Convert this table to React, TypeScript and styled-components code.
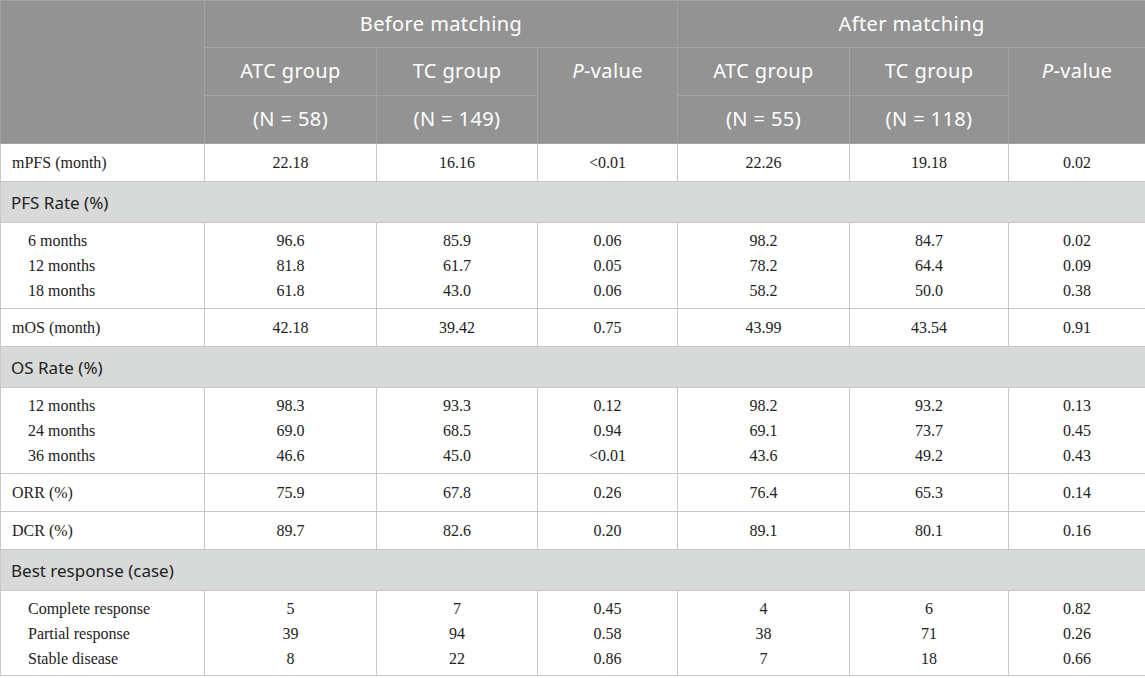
import styled, { createGlobalStyle } from "styled-components";

const GlobalStyle = createGlobalStyle`
  html, body {
    margin: 0;
    padding: 0;
    background: #ffffff;
  }
`;

type Line = string[];

type BodyRow =
  | { kind: "single"; label: string; values: string[] }
  | { kind: "section"; label: string }
  | { kind: "group"; labels: string[]; values: Line[]; height: number };

const rows: BodyRow[] = [
  { kind: "single", label: "mPFS (month)", values: ["22.18", "16.16", "<0.01", "22.26", "19.18", "0.02"] },
  { kind: "section", label: "PFS Rate (%)" },
  {
    kind: "group",
    height: 86,
    labels: ["6 months", "12 months", "18 months"],
    values: [
      ["96.6", "81.8", "61.8"],
      ["85.9", "61.7", "43.0"],
      ["0.06", "0.05", "0.06"],
      ["98.2", "78.2", "58.2"],
      ["84.7", "64.4", "50.0"],
      ["0.02", "0.09", "0.38"],
    ],
  },
  { kind: "single", label: "mOS (month)", values: ["42.18", "39.42", "0.75", "43.99", "43.54", "0.91"] },
  { kind: "section", label: "OS Rate (%)" },
  {
    kind: "group",
    height: 86,
    labels: ["12 months", "24 months", "36 months"],
    values: [
      ["98.3", "69.0", "46.6"],
      ["93.3", "68.5", "45.0"],
      ["0.12", "0.94", "<0.01"],
      ["98.2", "69.1", "43.6"],
      ["93.2", "73.7", "49.2"],
      ["0.13", "0.45", "0.43"],
    ],
  },
  { kind: "single", label: "ORR (%)", values: ["75.9", "67.8", "0.26", "76.4", "65.3", "0.14"] },
  { kind: "single", label: "DCR (%)", values: ["89.7", "82.6", "0.20", "89.1", "80.1", "0.16"] },
  { kind: "section", label: "Best response (case)" },
  {
    kind: "group",
    height: 85,
    labels: ["Complete response", "Partial response", "Stable disease"],
    values: [
      ["5", "39", "8"],
      ["7", "94", "22"],
      ["0.45", "0.58", "0.86"],
      ["4", "38", "7"],
      ["6", "71", "18"],
      ["0.82", "0.26", "0.66"],
    ],
  },
];

const colWidths = [204, 172, 161, 140, 172, 159, 137];

const App: React.FC = () => {
  return (
    <>
      <GlobalStyle />
      <Table>
        <colgroup>
          {colWidths.map((w, i) => (
            <col key={i} style={{ width: w }} />
          ))}
        </colgroup>
        <thead>
          <HeadRow $height={47}>
            <HeadCell rowSpan={3} />
            <HeadCell colSpan={3}>Before matching</HeadCell>
            <HeadCell colSpan={3}>After matching</HeadCell>
          </HeadRow>
          <HeadRow $height={48}>
            <HeadCell>ATC group</HeadCell>
            <HeadCell>TC group</HeadCell>
            <HeadCell rowSpan={2}>
              <em>P</em>-value
            </HeadCell>
            <HeadCell>ATC group</HeadCell>
            <HeadCell>TC group</HeadCell>
            <HeadCell rowSpan={2}>
              <em>P</em>-value
            </HeadCell>
          </HeadRow>
          <HeadRow $height={48}>
            <HeadCell>(N = 58)</HeadCell>
            <HeadCell>(N = 149)</HeadCell>
            <HeadCell>(N = 55)</HeadCell>
            <HeadCell>(N = 118)</HeadCell>
          </HeadRow>
        </thead>
        <tbody>
          {rows.map((row, i) => {
            if (row.kind === "section") {
              return (
                <BodyTr key={i} $height={41}>
                  <SectionCell colSpan={7}>{row.label}</SectionCell>
                </BodyTr>
              );
            }
            if (row.kind === "single") {
              return (
                <BodyTr key={i} $height={38}>
                  <LabelCell>{row.label}</LabelCell>
                  {row.values.map((v, j) => (
                    <ValueCell key={j}>{v}</ValueCell>
                  ))}
                </BodyTr>
              );
            }
            return (
              <BodyTr key={i} $height={row.height}>
                <GroupLabelCell>
                  {row.labels.map((l, j) => (
                    <SubLine key={j}>{l}</SubLine>
                  ))}
                </GroupLabelCell>
                {row.values.map((col, j) => (
                  <GroupValueCell key={j}>
                    {col.map((v, k) => (
                      <SubLine key={k}>{v}</SubLine>
                    ))}
                  </GroupValueCell>
                ))}
              </BodyTr>
            );
          })}
        </tbody>
      </Table>
    </>
  );
};

const Table = styled.table`
  width: 1145px;
  table-layout: fixed;
  border-collapse: collapse;
`;

const HeadRow = styled.tr<{ $height: number }>`
  height: ${(p) => p.$height}px;
`;

const HeadCell = styled.th`
  background: #939393;
  border: 1px solid #a4a4a4;
  color: #ffffff;
  font-family: "Noto Sans", "Open Sans", sans-serif;
  font-size: 20px;
  letter-spacing: 0.4px;
  font-weight: 400;
  text-align: center;
  vertical-align: top;
  padding: 9px 6px 0;
  line-height: 28px;
  box-sizing: border-box;

  em {
    font-style: italic;
  }
`;

const BodyTr = styled.tr<{ $height: number }>`
  height: ${(p) => p.$height}px;
`;

const BaseCell = styled.td`
  border: 1px solid #c8c8c8;
  color: #222222;
  font-family: "Liberation Serif", "Times New Roman", serif;
  font-size: 16px;
  box-sizing: border-box;
  padding: 0 11px;
`;

const LabelCell = styled(BaseCell)`
  text-align: left;
  vertical-align: middle;
`;

const ValueCell = styled(BaseCell)`
  text-align: center;
  vertical-align: middle;
`;

const SectionCell = styled.td`
  background: #d8d9d9;
  border: 1px solid #c8c8c8;
  color: #222222;
  font-family: "Noto Sans", "Open Sans", sans-serif;
  font-size: 17px;
  padding: 0 10px;
  vertical-align: middle;
`;

const GroupLabelCell = styled(BaseCell)`
  text-align: left;
  vertical-align: top;
  padding: 5px 11px 0 27px;
`;

const GroupValueCell = styled(BaseCell)`
  text-align: center;
  vertical-align: top;
  padding-top: 5px;
`;

const SubLine = styled.div`
  line-height: 25px;
  height: 25px;
`;

export default App;
